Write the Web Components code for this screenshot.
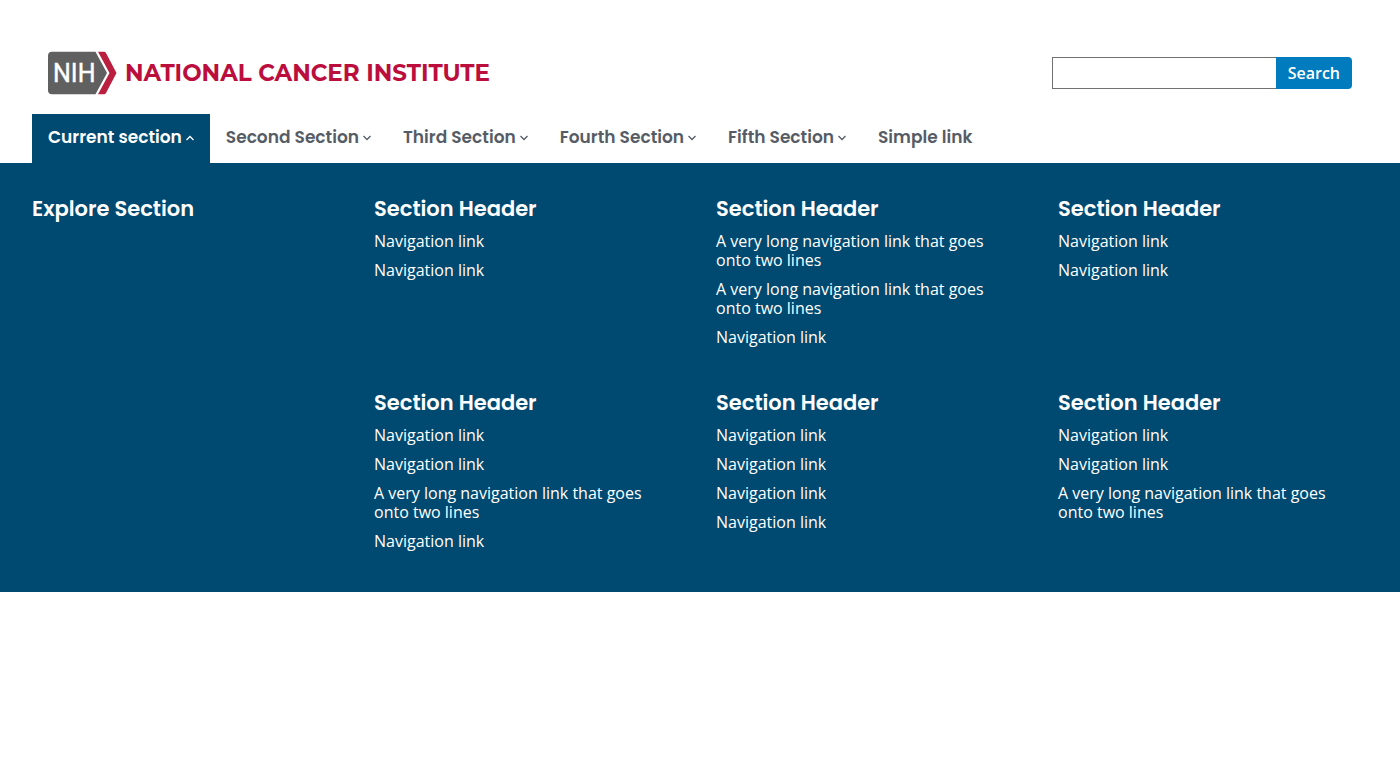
<!DOCTYPE html>
<html lang="en">
<head>
<meta charset="utf-8">
<meta name="viewport" content="width=device-width, initial-scale=1">
<title>National Cancer Institute</title>
<style>
  body { margin: 0; background: #fff; font-family: "Open Sans", sans-serif; font-size: 16px; color: #1b1b1b; }
</style>
</head>
<body>
<nci-header>
  <nci-logo slot="logo"></nci-logo>
  <nci-search slot="search"></nci-search>
  <nci-nav slot="nav">
    <nci-nav-item expanded>Current section</nci-nav-item>
    <nci-nav-item>Second Section</nci-nav-item>
    <nci-nav-item>Third Section</nci-nav-item>
    <nci-nav-item>Fourth Section</nci-nav-item>
    <nci-nav-item>Fifth Section</nci-nav-item>
    <nci-nav-item href="#simple">Simple link</nci-nav-item>
  </nci-nav>
</nci-header>
<nci-megamenu label="Explore Section">
  <nci-menu-group label="Section Header">
    <nci-menu-link>Navigation link</nci-menu-link>
    <nci-menu-link>Navigation link</nci-menu-link>
  </nci-menu-group>
  <nci-menu-group label="Section Header">
    <nci-menu-link>A very long navigation link that goes onto two lines</nci-menu-link>
    <nci-menu-link>A very long navigation link that goes onto two lines</nci-menu-link>
    <nci-menu-link>Navigation link</nci-menu-link>
  </nci-menu-group>
  <nci-menu-group label="Section Header">
    <nci-menu-link>Navigation link</nci-menu-link>
    <nci-menu-link>Navigation link</nci-menu-link>
  </nci-menu-group>
  <nci-menu-group label="Section Header">
    <nci-menu-link>Navigation link</nci-menu-link>
    <nci-menu-link>Navigation link</nci-menu-link>
    <nci-menu-link>A very long navigation link that goes onto two lines</nci-menu-link>
    <nci-menu-link>Navigation link</nci-menu-link>
  </nci-menu-group>
  <nci-menu-group label="Section Header">
    <nci-menu-link>Navigation link</nci-menu-link>
    <nci-menu-link>Navigation link</nci-menu-link>
    <nci-menu-link>Navigation link</nci-menu-link>
    <nci-menu-link>Navigation link</nci-menu-link>
  </nci-menu-group>
  <nci-menu-group label="Section Header">
    <nci-menu-link>Navigation link</nci-menu-link>
    <nci-menu-link>Navigation link</nci-menu-link>
    <nci-menu-link>A very long navigation link that goes onto two lines</nci-menu-link>
  </nci-menu-group>
</nci-megamenu>

<script>
class Base extends HTMLElement {
  constructor() {
    super();
    this.attachShadow({ mode: "open" });
  }
  connectedCallback() {
    this.shadowRoot.innerHTML = this.render();
  }
}

customElements.define("nci-header", class extends Base {
  render() {
    return `
    <style>
      :host { display: block; padding-top: 51px; }
      .top { display: flex; align-items: center; justify-content: space-between; gap: 32px; padding: 0 48px; margin-bottom: 19px; }
    </style>
    <header>
      <div class="top"><slot name="logo"></slot><slot name="search"></slot></div>
      <slot name="nav"></slot>
    </header>`;
  }
});

customElements.define("nci-logo", class extends Base {
  render() {
    return `
    <style>
      :host { display: block; }
      a { display: flex; align-items: center; gap: 8px; color: #bb0e3d; text-decoration: none; }
      svg { display: block; flex: none; }
      text { font: 400 25px Roboto, sans-serif; }
      .name { font: 700 23px/28px Montserrat, Poppins, Inter, sans-serif; white-space: nowrap; }
    </style>
    <a href="#home">
      <svg width="69" height="44" viewBox="0 0 69 44">
        <path fill="#606060" d="M4 .7H47.500L59 22 47.500 43.300H4Q0 43.300 0 39.300V4.700Q0 .7 4 .7Z"/>
        <path fill="#bb1f40" d="M50 .7H56Q57.300 .7 58 2L68.500 22 58 42Q57.300 43.300 56 43.300H50L61.500 22Z"/>
        <text x="5" y="31" fill="#fff" stroke="#fff" stroke-width=".4">NIH</text>
      </svg>
      <span class="name">NATIONAL CANCER INSTITUTE</span>
    </a>`;
  }
});

customElements.define("nci-search", class extends Base {
  render() {
    return `
    <style>
      :host { display: block; }
      form { display: flex; height: 32px; }
      input { box-sizing: border-box; width: 224px; margin: 0; padding: 0 8px; border: 1px solid #71716f; border-right: 0; border-radius: 0; background: #fff; font: 16px/20px "Open Sans", sans-serif; }
      button { margin: 0; padding: 0 12px; border: 0; border-radius: 0 4px 4px 0; background: #007bbd; color: #fff; font: 600 16px/20px "Open Sans", sans-serif; }
    </style>
    <form role="search">
      <input type="search" aria-label="Search">
      <button type="submit">Search</button>
    </form>`;
  }
});

customElements.define("nci-nav", class extends Base {
  render() {
    return `
    <style>
      :host { display: block; padding: 0 32px; }
      nav { display: flex; }
    </style>
    <nav aria-label="Primary"><slot></slot></nav>`;
  }
});

customElements.define("nci-nav-item", class extends Base {
  render() {
    const open = this.hasAttribute("expanded");
    const href = this.getAttribute("href");
    const icon = `<svg width="8" height="6" viewBox="0 0 8 6" aria-hidden="true"><path fill="none" stroke="currentColor" stroke-width="1.300" d="${open ? "M.5 5 4 1.500 7.500 5" : "M.5 1 4 4.500 7.500 1"}"/></svg>`;
    return `
    <style>
      :host { display: block; }
      button, a { display: flex; align-items: center; gap: 4px; box-sizing: border-box; height: 49px; margin: 0; padding: 0 16px 3px; border: 0; background: none; color: #565c65; font: 600 17px/24px Poppins, Inter, sans-serif; text-decoration: none; white-space: nowrap; }
      :host([expanded]) button { background: #004971; color: #fff; }
      svg { display: block; padding-top: 2px; }
    </style>
    ${href ? `<a href="${href}"><slot></slot></a>` : `<button type="button" aria-expanded="${open}"><slot></slot>${icon}</button>`}`;
  }
});

customElements.define("nci-megamenu", class extends Base {
  render() {
    return `
    <style>
      :host { display: block; background: #004971; color: #fff; }
      section { display: grid; grid-template-columns: repeat(4, minmax(0, 1fr)); gap: 32px; padding: 32px 32px 31px; }
      h2 { grid-row: 1 / span 2; margin: 0; font: 600 21px/28px Poppins, Inter, sans-serif; }
    </style>
    <section>
      <h2>${this.getAttribute("label")}</h2>
      <slot></slot>
    </section>`;
  }
});

customElements.define("nci-menu-group", class extends Base {
  render() {
    return `
    <style>
      :host { display: block; }
      h3 { margin: 0 0 9px; font: 600 21px/28px Poppins, Inter, sans-serif; }
      div { display: flex; flex-direction: column; gap: 10px; padding: 0 16px 10px 0; }
    </style>
    <h3>${this.getAttribute("label")}</h3>
    <div role="list"><slot></slot></div>`;
  }
});

customElements.define("nci-menu-link", class extends Base {
  render() {
    return `
    <style>
      :host { display: block; line-height: 19px; }
      a { color: #fff; text-decoration: none; }
    </style>
    <a href="#link"><slot></slot></a>`;
  }
  connectedCallback() {
    super.connectedCallback();
    this.setAttribute("role", "listitem");
  }
});
</script>
</body>
</html>
